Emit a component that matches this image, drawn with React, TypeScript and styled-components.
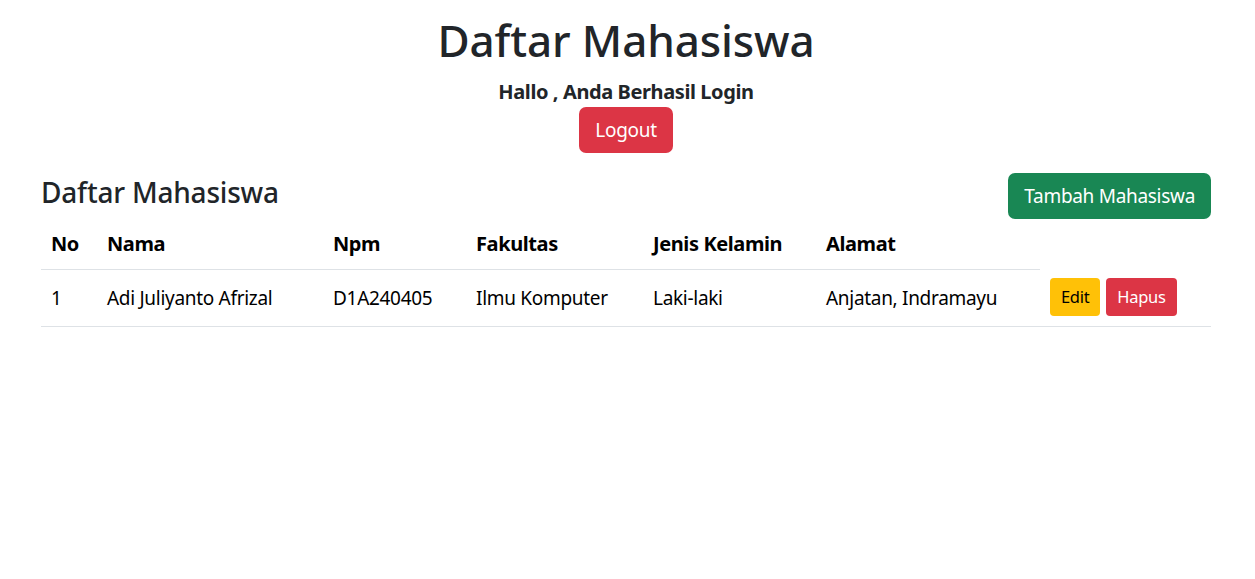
import React from "react";
import styled, { createGlobalStyle } from "styled-components";

const GlobalStyle = createGlobalStyle`
  html, body { margin: 0; padding: 0; background: #fff; }
  body {
    font-family: "Noto Sans", "Open Sans", Arial, sans-serif;
    font-size: 19px;
    line-height: 30px;
    letter-spacing: -0.3px;
    color: #212529;
  }
  * { box-sizing: border-box; }
`;

const Page = styled.div`
  margin: 0 44px 0 41px;
`;

const Hero = styled.header`
  display: flex;
  flex-direction: column;
  align-items: center;
  padding-top: 14px;
`;

const Title = styled.h1`
  margin: 0;
  font-size: 44px;
  font-weight: 500;
  line-height: 1.2;
  letter-spacing: -0.1px;
`;

const Greeting = styled.p`
  margin: 13px 0 0;
  font-size: 20px;
  font-weight: 700;
  line-height: 1.2;
  letter-spacing: -0.4px;
`;

const Button = styled.button<{ $variant: "danger" | "success" | "warning"; $small?: boolean }>`
  display: inline-block;
  border: 1px solid transparent;
  font-family: inherit;
  font-weight: 400;
  cursor: pointer;
  letter-spacing: -0.3px;
  font-size: ${(p) => (p.$small ? "16.5px" : "19px")};
  line-height: ${(p) => (p.$small ? "26px" : "30px")};
  padding: ${(p) => (p.$small ? "5px 10px" : "7px 15px")};
  border-radius: ${(p) => (p.$small ? "4px" : "7px")};
  background: ${(p) =>
    p.$variant === "danger" ? "#dc3545" : p.$variant === "success" ? "#198754" : "#ffc107"};
  color: ${(p) => (p.$variant === "warning" ? "#000" : "#fff")};
`;

const LogoutButton = styled(Button)`
  margin-top: 3px;
`;

const ListHeader = styled.div`
  display: flex;
  justify-content: space-between;
  align-items: center;
  margin-top: 20px;
`;

const SubTitle = styled.h4`
  margin: 0;
  padding-bottom: 7px;
  font-size: 28px;
  font-weight: 500;
  line-height: 1.2;
  letter-spacing: -0.2px;
`;

const Table = styled.table`
  width: 100%;
  border-collapse: collapse;
  table-layout: fixed;
  color: #000;
  vertical-align: top;
`;

const Th = styled.th`
  text-align: left;
  font-size: 20px;
  font-weight: 700;
  letter-spacing: -0.4px;
  padding: 10px;
  border-bottom: 1px solid #dee2e6;
`;

const Td = styled.td<{ $tight?: boolean }>`
  padding: ${(p) => (p.$tight ? "9px 10px 10px" : "8px 10px 9px")};
  border-bottom: 1px solid #dee2e6;
`;

const Actions = styled.div`
  display: flex;
  gap: 6px;
`;

const widths = [56, 226, 143, 177, 173, 224, 171];
const headers = ["No", "Nama", "Npm", "Fakultas", "Jenis Kelamin", "Alamat"];
const rows = [
  ["1", "Adi Juliyanto Afrizal", "D1A240405", "Ilmu Komputer", "Laki-laki", "Anjatan, Indramayu"],
];

export default function App() {
  return (
    <>
      <GlobalStyle />
      <Page>
        <Hero>
          <Title>Daftar Mahasiswa</Title>
          <Greeting>Hallo , Anda Berhasil Login</Greeting>
          <LogoutButton $variant="danger">Logout</LogoutButton>
        </Hero>
        <ListHeader>
          <SubTitle>Daftar Mahasiswa</SubTitle>
          <Button $variant="success">Tambah Mahasiswa</Button>
        </ListHeader>
        <Table>
          <colgroup>
            {widths.map((w, i) => (
              <col key={i} style={{ width: w }} />
            ))}
          </colgroup>
          <thead>
            <tr>
              {headers.map((h) => (
                <Th key={h}>{h}</Th>
              ))}
            </tr>
          </thead>
          <tbody>
            {rows.map((r) => (
              <tr key={r[0]}>
                {r.map((c, i) => (
                  <Td key={i}>{c}</Td>
                ))}
                <Td $tight>
                  <Actions>
                    <Button $variant="warning" $small>Edit</Button>
                    <Button $variant="danger" $small>Hapus</Button>
                  </Actions>
                </Td>
              </tr>
            ))}
          </tbody>
        </Table>
      </Page>
    </>
  );
}
